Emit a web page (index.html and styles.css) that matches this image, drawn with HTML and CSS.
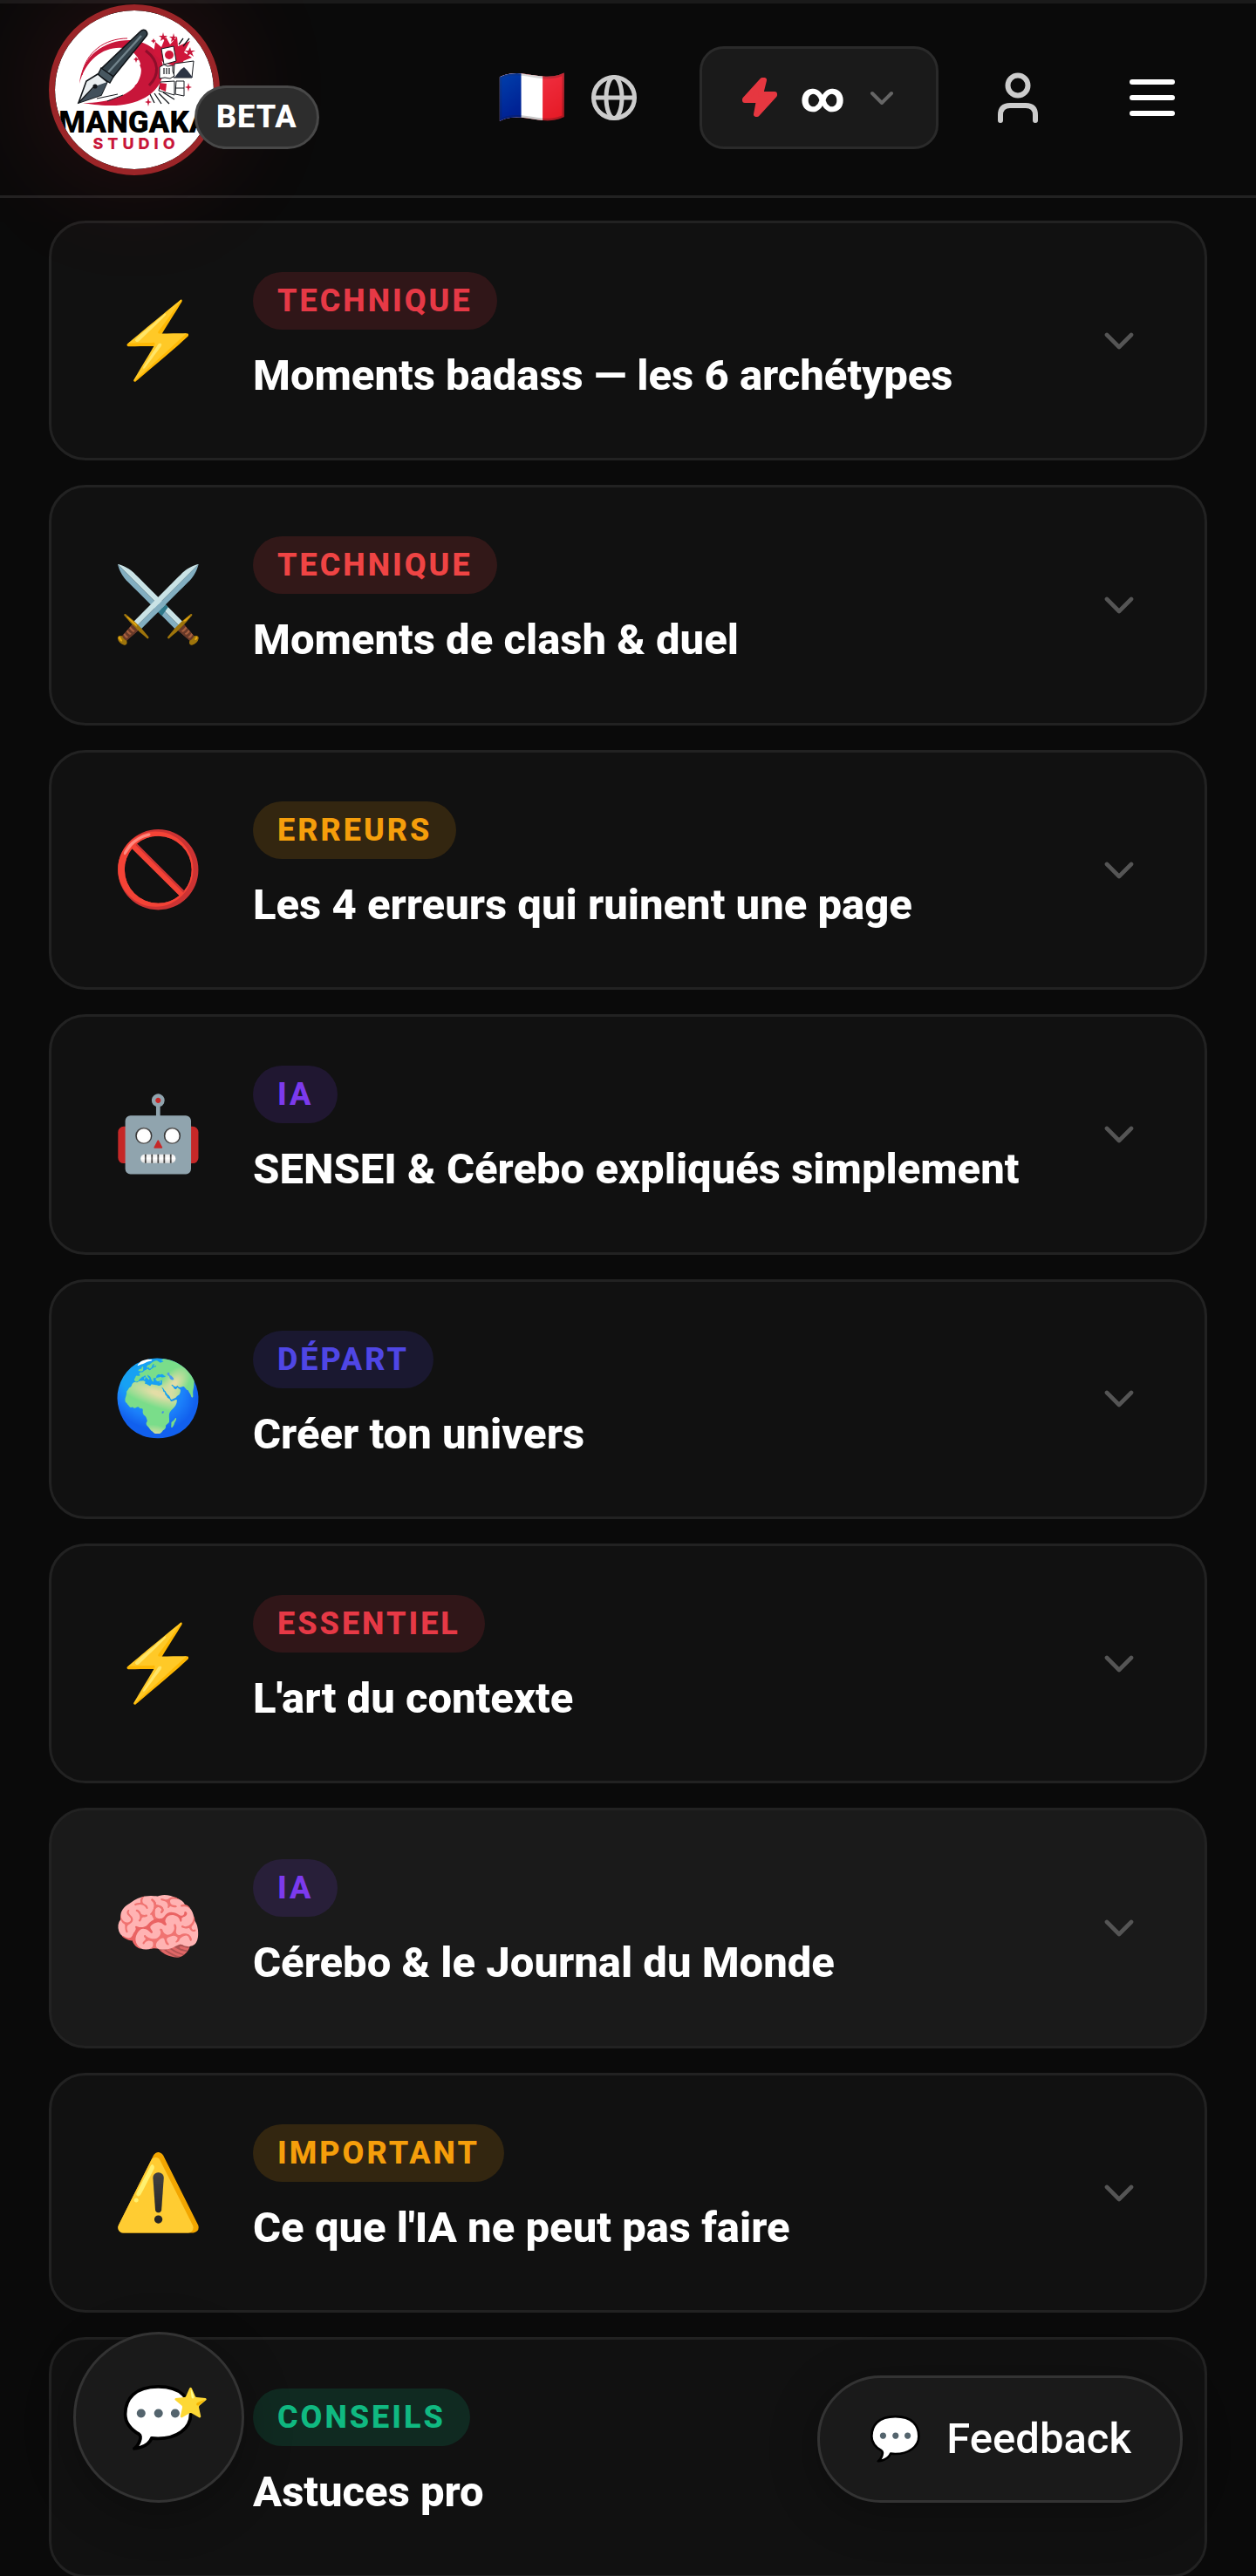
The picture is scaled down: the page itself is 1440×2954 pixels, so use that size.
FILE: index.html
```html
<!DOCTYPE html>
<html lang="fr">
<head>
<meta charset="utf-8">
<meta name="viewport" content="width=device-width, initial-scale=1">
<title>Mangaka Studio</title>
<link rel="stylesheet" href="styles.css">
</head>
<body>
<header class="topbar">
  <a class="brand" href="#" aria-label="Mangaka Studio">
    <svg class="logo" viewBox="0 0 182 182" aria-hidden="true">
      <circle cx="91" cy="91" r="91" fill="#fff"/>
      <!-- brush swirl -->
      <path d="M28 84C31 52 56 34 86 34c26 2 40 18 38 38-4 26-34 38-62 37-12 0-22-2-30-3 30 0 52-8 62-22 10-16 4-32-10-40-22-6-48 8-56 40z" fill="#c8163a"/>
      <path d="M31 74c4-26 26-42 52-42" fill="none" stroke="#c8163a" stroke-width="1"/>
      <path d="M98 62c5 10 3 18-6 25" fill="none" stroke="#c8163a" stroke-width="2"/>
      <path d="M104 46c16 12 16 28 4 40" fill="none" stroke="#8d0e2a" stroke-width="3"/>
      <path d="M48 101l24-5M60 104l18-7" stroke="#14171c" stroke-width="1"/>
      <!-- burst and comic panels -->
      <path d="M115 36l7 6 5-12 5 9 8-9 1 11 14-6-7 13 9 6-10 4 4 10-26-8-12-10z" fill="#d0163a"/>
      <path d="M122 44l14-3 3 17-14 4z" fill="#fff" stroke="#14171c"/>
      <circle cx="131" cy="51" r="5" fill="#d0163a"/>
      <path d="M137 61l22-3-2 19h-21z" fill="#fff" stroke="#14171c"/>
      <path d="M137 77l7-9 4-3 4 4 6 8z" fill="#2c3444"/>
      <path d="M120 65l5-3 4 2 6-1v7l2 5-5 3-6-1-6 1z" fill="#fff" stroke="#14171c"/>
      <path d="M125 66v7M128 66v7M131 66v7" stroke="#14171c" stroke-width="1.2"/>
      <path d="M121 82l16-1v16l-18-5zM139 81h9v17l-10-2zM138 89h10" fill="#fff" stroke="#14171c"/>
      <path d="M120 83l8 1-1 9-7-3z" fill="#d0163a"/>
      <path d="M109 96l5 10M114 95l8 12M119 95l12 12M124 94l13 8M142 39l5-7M147 41l7-9" stroke="#14171c" stroke-width="1.3"/>
      <g fill="#c8163a">
        <path d="M124 25l1 4h4l-3 2 1 4-3-2-3 2 1-4-3-2h4z"/>
        <path d="M136 26l1 4h3l-3 2 1 4-2-2-3 2 1-4-3-2h4zM155 42l1 4h5l-4 2 2 5-4-3-4 3 1-5-4-2h5zM153 83l1 4 3 1-3 1-1 4-1-4-3-1 3-1zM107 100l1 4 3 1-3 1-1 4-1-4-3-1 3-1zM93 53l1 2 3 1-3 1-1 3-1-3-2-1 2-1zM113 32l1 2 2 1-2 1-1 2-1-2-2-1 2-1z"/>
      </g>
      <!-- fountain pen -->
      <path d="M98 24q3-3 6-1 3 3 1 6L67 76 53 67z" fill="#34424a" stroke="#101418" stroke-width="1.6"/>
      <path d="M99 29L61 71" stroke="#71838b" stroke-width="2.4"/>
      <path d="M53 66l14 10-4 7-14-9z" fill="#475760" stroke="#101418" stroke-width="1.4"/>
      <path d="M49 73L36 81l-9 25 26-9 7-15z" fill="#e9eef0" stroke="#101418" stroke-width="1.6"/>
      <path d="M60 82l-7 15-26 9 19-19z" fill="#42505b"/>
      <path d="M27 106l17-18" stroke="#101418" stroke-width="1.4"/>
      <circle cx="46" cy="87" r="2.6" fill="#101418"/>
      <text class="logo-name" x="91" y="140">MANGAKA</text>
      <text class="logo-sub" x="93" y="159">STUDIO</text>
    </svg>
    <span class="beta">BETA</span>
  </a>
  <nav class="actions" aria-label="Navigation">
    <button class="lang" type="button" aria-label="Langue">
      <span class="flag">🇫🇷</span>
      <svg class="globe" viewBox="0 0 52 52" aria-hidden="true"><circle cx="26" cy="26" r="23.500"/><ellipse cx="26" cy="26" rx="9" ry="23.500"/><path d="M3 26h46"/></svg>
    </button>
    <button class="credits" type="button" aria-label="Crédits">
      <svg class="bolt" viewBox="0 0 42 46" aria-hidden="true"><path d="M24 3L4 25v1h16l-3 16h1l20-22v-1H22l4-16z"/></svg>
      <span class="infinity">∞</span>
      <svg class="caret" viewBox="0 0 34 34" aria-hidden="true"><path d="M6 12l11 11 11-11"/></svg>
    </button>
    <button class="icon-btn" type="button" aria-label="Profil">
      <svg class="user" viewBox="0 0 48 60" aria-hidden="true"><circle cx="24" cy="16" r="11.500"/><path d="M4 56v-6q0-11 11-11h18q11 0 11 11v6"/></svg>
    </button>
    <button class="icon-btn" type="button" aria-label="Menu">
      <svg class="menu" viewBox="0 0 52 42" aria-hidden="true"><path d="M3 3h46M3 21h46M3 39h46"/></svg>
    </button>
  </nav>
</header>
<main class="content">
  <div class="guides">
    <button class="card" type="button"><span class="emoji">⚡</span><span class="body"><span class="tag crimson">TECHNIQUE</span><span class="title">Moments badass — les 6 archétypes</span></span><svg class="chevron" viewBox="0 0 24 24" aria-hidden="true"><path d="M6 9l6 6 6-6"/></svg></button>
    <button class="card" type="button"><span class="emoji">⚔️</span><span class="body"><span class="tag red">TECHNIQUE</span><span class="title">Moments de clash &amp; duel</span></span><svg class="chevron" viewBox="0 0 24 24" aria-hidden="true"><path d="M6 9l6 6 6-6"/></svg></button>
    <button class="card" type="button"><span class="emoji">🚫</span><span class="body"><span class="tag amber">ERREURS</span><span class="title">Les 4 erreurs qui ruinent une page</span></span><svg class="chevron" viewBox="0 0 24 24" aria-hidden="true"><path d="M6 9l6 6 6-6"/></svg></button>
    <button class="card" type="button"><span class="emoji">🤖</span><span class="body"><span class="tag violet">IA</span><span class="title">SENSEI &amp; Cérebo expliqués simplement</span></span><svg class="chevron" viewBox="0 0 24 24" aria-hidden="true"><path d="M6 9l6 6 6-6"/></svg></button>
    <button class="card" type="button"><span class="emoji">🌍</span><span class="body"><span class="tag indigo">DÉPART</span><span class="title">Créer ton univers</span></span><svg class="chevron" viewBox="0 0 24 24" aria-hidden="true"><path d="M6 9l6 6 6-6"/></svg></button>
    <button class="card" type="button"><span class="emoji">⚡</span><span class="body"><span class="tag crimson">ESSENTIEL</span><span class="title">L'art du contexte</span></span><svg class="chevron" viewBox="0 0 24 24" aria-hidden="true"><path d="M6 9l6 6 6-6"/></svg></button>
    <button class="card active" type="button"><span class="emoji">🧠</span><span class="body"><span class="tag violet">IA</span><span class="title">Cérebo &amp; le Journal du Monde</span></span><svg class="chevron" viewBox="0 0 24 24" aria-hidden="true"><path d="M6 9l6 6 6-6"/></svg></button>
    <button class="card" type="button"><span class="emoji">⚠️</span><span class="body"><span class="tag amber">IMPORTANT</span><span class="title">Ce que l'IA ne peut pas faire</span></span><svg class="chevron" viewBox="0 0 24 24" aria-hidden="true"><path d="M6 9l6 6 6-6"/></svg></button>
    <button class="card" type="button"><span class="emoji"></span><span class="body"><span class="tag green">CONSEILS</span><span class="title">Astuces pro</span></span><svg class="chevron" viewBox="0 0 24 24" aria-hidden="true"><path d="M6 9l6 6 6-6"/></svg></button>
  </div>
</main>
<button class="review" type="button" aria-label="Donner un avis"><span class="bubble">💬</span><span class="star">⭐</span></button>
<button class="feedback" type="button"><span class="feedback-icon">💬</span>Feedback</button>
</body>
</html>
```
FILE: styles.css
```css
* { box-sizing: border-box; }

body {
  margin: 0;
  height: 100vh;
  display: flex;
  flex-direction: column;
  background: #0a0a0a;
  color: #fff;
  font-family: Roboto, "Noto Sans", sans-serif;
}

button {
  margin: 0;
  padding: 0;
  border: 0;
  background: none;
  color: inherit;
  font: inherit;
  text-align: left;
}

svg { display: block; flex: none; }

.emoji, .flag, .bubble, .star, .feedback-icon {
  font-family: "Noto Color Emoji", Roboto, sans-serif;
  font-weight: 400;
}

/* top bar */
.topbar {
  position: relative;
  z-index: 1;
  flex: none;
  display: flex;
  align-items: center;
  justify-content: space-between;
  padding: 0 64px 4px 56px;
  height: 227px;
  background: #0a0a0a;
  border-top: 4px solid #1a1a1a;
  border-bottom: 3px solid #222;
}

.brand {
  display: flex;
  align-items: center;
  align-self: flex-start;
  padding-top: 1px;
  color: #fff;
  text-decoration: none;
}

.logo {
  width: 196px;
  height: 196px;
  border: 7px solid #9b2528;
  border-radius: 50%;
  box-shadow: 0 0 140px rgba(230, 57, 70, 0.16);
}

.logo-name {
  font: 900 35px Roboto, sans-serif;
  text-anchor: middle;
  fill: #000;
}

.logo-sub {
  font: 800 18px Inter, sans-serif;
  letter-spacing: 5px;
  text-anchor: middle;
  fill: #c8163a;
}

.beta {
  position: relative;
  margin: 62px 0 0 -29px;
  padding: 0 22px;
  border: 3px solid #484848;
  border-radius: 37px;
  background: #2d2d2d;
  font-size: 36px;
  font-weight: 800;
  line-height: 67px;
  letter-spacing: 1px;
}

.actions { display: flex; align-items: center; }

.lang { display: flex; align-items: center; gap: 28px; margin-right: 72px; }

.flag { font-size: 64px; line-height: 72px; }

.globe { width: 52px; height: 52px; fill: none; stroke: #ccc; stroke-width: 5; }

.credits {
  display: flex;
  align-items: center;
  gap: 25px;
  height: 118px;
  padding: 0 45px;
  margin-right: 67px;
  border: 3px solid #2a2a2a;
  border-radius: 28px;
  background: #1a1a1a;
}

.bolt { width: 42px; height: 46px; fill: #e63740; stroke: #e63740; stroke-width: 6; stroke-linejoin: round; }

.infinity { font-size: 49px; font-weight: 800; line-height: 56px; }

.caret { width: 34px; height: 34px; fill: none; stroke: #666; stroke-width: 4; stroke-linecap: round; stroke-linejoin: round; }

.icon-btn { margin-right: 104px; }
.icon-btn:last-child { margin-right: 29px; }

.user { width: 48px; height: 60px; fill: none; stroke: #ccc; stroke-width: 6; stroke-linecap: round; }

.menu { width: 52px; height: 42px; fill: none; stroke: #fff; stroke-width: 6; stroke-linecap: round; }

/* guide list */
.content {
  flex: 1;
  min-height: 0;
  overflow-y: auto;
  scrollbar-width: none;
  padding: 26px 56px 56px;
}

.guides { display: flex; flex-direction: column; gap: 28px; }

.card {
  display: flex;
  align-items: center;
  gap: 56px;
  padding: 56px 70px;
  border: 3px solid #222;
  border-radius: 42px;
  background: #111;
}

.card.active { background: #1a1a1a; }

.emoji { display: flex; justify-content: center; width: 105px; font-size: 84px; line-height: 98px; white-space: nowrap; }

.body { flex: 1; display: flex; flex-direction: column; align-items: flex-start; gap: 14px; }

.tag {
  padding: 0 28px;
  border-radius: 33px;
  font-size: 36px;
  font-weight: 800;
  line-height: 66px;
  letter-spacing: 3px;
}

.crimson { color: #e63946; background: rgba(230, 57, 70, 0.15); }
.red { color: #ef4444; background: rgba(239, 68, 68, 0.15); }
.amber { color: #f59e0b; background: rgba(245, 158, 11, 0.15); }
.violet { color: #7c3aed; background: rgba(124, 58, 237, 0.15); }
.indigo { color: #4f46e5; background: rgba(79, 70, 229, 0.15); }
.green { color: #10b981; background: rgba(16, 185, 129, 0.15); }

.title { font-size: 49px; font-weight: 800; line-height: 1.58; }

.chevron { width: 56px; height: 56px; fill: none; stroke: #555; stroke-width: 2; stroke-linecap: round; stroke-linejoin: round; }

/* floating actions */
.review, .feedback {
  position: fixed;
  bottom: 84px;
  z-index: 2;
  display: flex;
  align-items: center;
  border: 3px solid #333;
  background: #1a1a1a;
  box-shadow: 0 11px 56px rgba(0, 0, 0, 0.3);
}

.review { left: 84px; justify-content: center; width: 196px; height: 196px; border-radius: 50%; }

.bubble { font-size: 68px; line-height: 80px; }

.star { position: absolute; top: 58px; right: 38px; font-size: 33px; line-height: 42px; }

.feedback {
  right: 84px;
  gap: 28px;
  height: 146px;
  padding: 0 56px;
  border-radius: 73px;
  font-size: 49px;
  font-weight: 500;
  line-height: 56px;
}

.feedback-icon { font-size: 49px; }
```
